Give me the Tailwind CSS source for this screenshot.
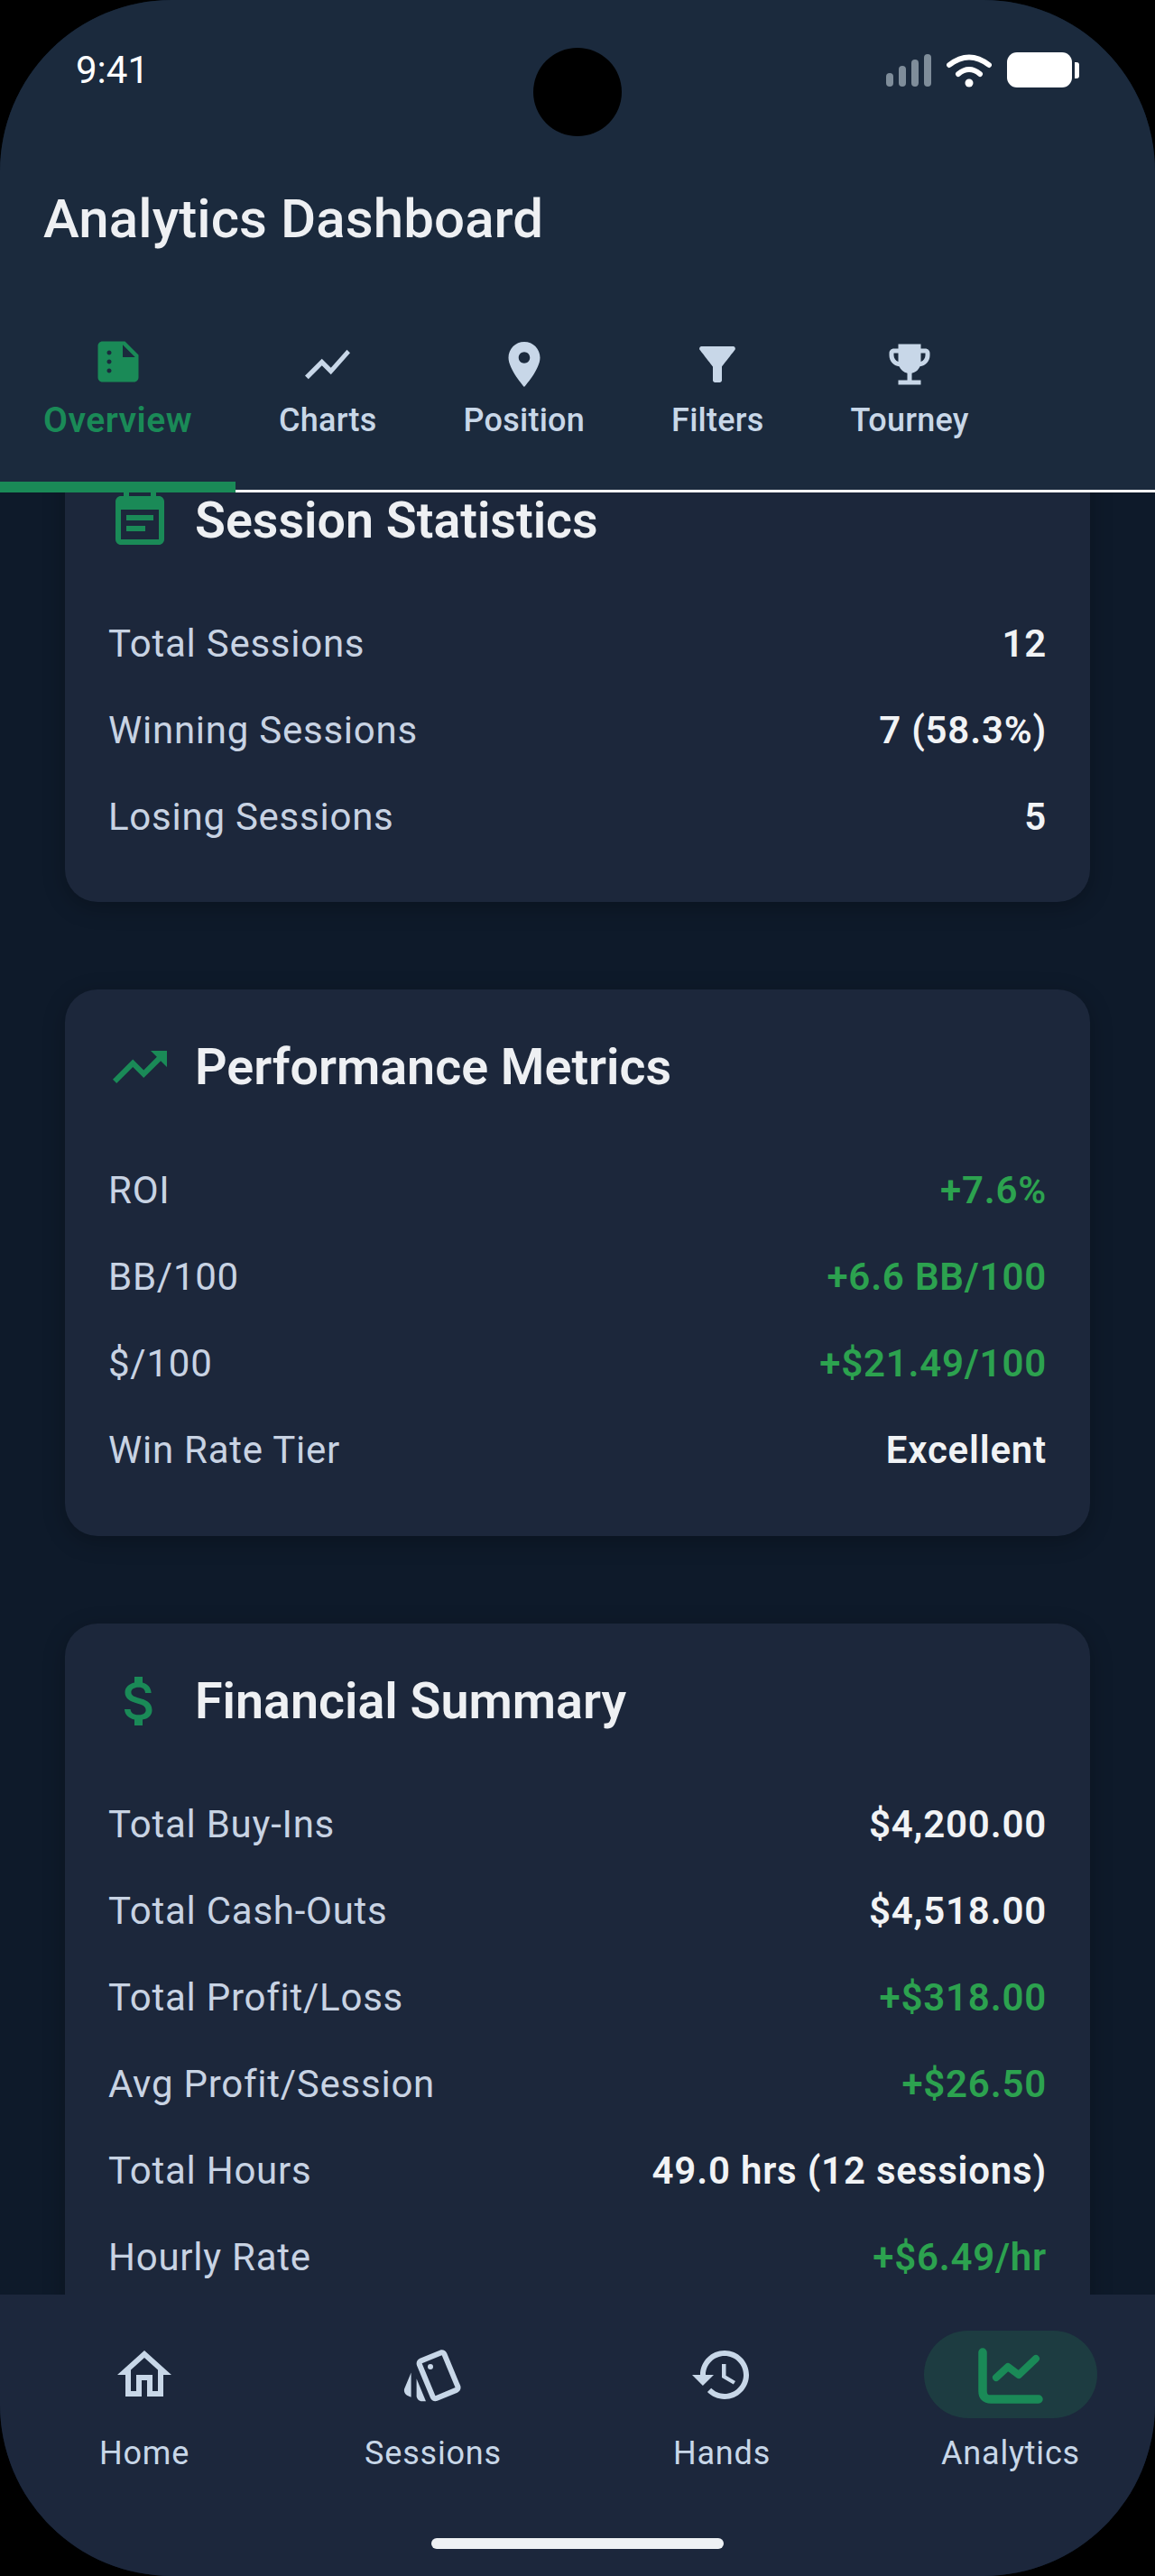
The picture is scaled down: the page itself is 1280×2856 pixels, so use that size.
<!DOCTYPE html>
<html lang="en">
<head>
  <meta charset="UTF-8" />
  <meta name="viewport" content="width=device-width, initial-scale=1.0" />
  <title>Analytics Dashboard</title>
  <script src="https://cdn.jsdelivr.net/npm/@tailwindcss/browser@4"></script>
</head>
<body class="bg-black font-['Roboto',sans-serif]">
  <div class="relative w-[1280px] h-[2856px] rounded-[190px] overflow-hidden flex flex-col bg-[#0e1a2a]">

    <!-- camera cutout -->
    <div class="absolute left-[591px] top-[53px] w-[98px] h-[98px] rounded-full bg-black z-20"></div>

    <header class="relative z-10 bg-[#1b2a3d] shrink-0">
      <div class="h-[155px] pl-[84px] pr-[84px] flex items-center justify-between">
        <span class="text-[42px] leading-none text-white">9:41</span>
        <div class="flex items-center gap-[17px]">
          <div class="flex items-end gap-[6px] h-[36px]">
            <span class="w-[8px] h-[15px] rounded-full bg-[#7f8d9a]"></span>
            <span class="w-[8px] h-[23px] rounded-full bg-[#7f8d9a]"></span>
            <span class="w-[8px] h-[30px] rounded-full bg-[#7f8d9a]"></span>
            <span class="w-[8px] h-[36px] rounded-full bg-[#7f8d9a]"></span>
          </div>
          <svg class="w-[50px] h-[38px]" viewBox="0 0 50 38" fill="none" stroke="white" stroke-width="6" stroke-linecap="round">
            <path d="M3 13 Q25 -4 47 13" />
            <path d="M13 23 Q25 13 37 23" />
            <circle cx="25" cy="33" r="4.5" fill="white" stroke="none" />
          </svg>
          <div class="flex items-center gap-[3px]">
            <div class="w-[72px] h-[39px] rounded-[11px] bg-white"></div>
            <div class="w-[5px] h-[18px] rounded-r-[3px] bg-white"></div>
          </div>
        </div>
      </div>

      <h1 class="mt-[52px] pl-[48px] text-[60px] leading-[72px] font-medium tracking-[0.1px] text-[#eef0f3]">Analytics Dashboard</h1>

      <nav class="relative mt-[95px] flex border-b-[3px] border-white pb-[55px]">
        <div class="relative px-[48px] flex flex-col items-center text-[#1a8a57]">
          <svg class="-mt-[3px] w-[60px] h-[60px]" viewBox="0 0 24 24" fill="currentColor"><path d="M15 3H5c-1.1 0-2 .9-2 2v14c0 1.1.89 2 1.99 2H19c1.1 0 2-.9 2-2V9l-6-6zM8 17c-.55 0-1-.45-1-1s.45-1 1-1 1 .45 1 1-.45 1-1 1zm0-4c-.55 0-1-.45-1-1s.45-1 1-1 1 .45 1 1-.45 1-1 1zm0-4c-.55 0-1-.45-1-1s.45-1 1-1 1 .45 1 1-.45 1-1 1zm6 1V4.5l5.5 5.5H14z"/></svg>
          <span class="mt-[13px] text-[39px] leading-[44px] tracking-[0.5px] font-semibold">Overview</span>
          <div class="absolute left-0 right-0 -bottom-[58px] h-[12px] bg-[#1a8a57]"></div>
        </div>
        <div class="px-[48px] flex flex-col items-center text-[#c8d7e8]">
          <svg class="w-[60px] h-[60px]" viewBox="0 0 24 24" fill="currentColor"><path d="M3.5 18.49l6-6.01 4 4L22 6.92l-1.41-1.41-7.09 7.97-4-4L2 16.99z"/></svg>
          <span class="mt-[10px] text-[36px] leading-[44px] tracking-[0.25px] font-medium">Charts</span>
        </div>
        <div class="px-[48px] flex flex-col items-center text-[#c8d7e8]">
          <svg class="w-[60px] h-[60px]" viewBox="0 0 24 24" fill="currentColor"><path d="M12 2C8.13 2 5 5.13 5 9c0 5.25 7 13 7 13s7-7.75 7-13c0-3.87-3.13-7-7-7zm0 9.5c-1.38 0-2.5-1.12-2.5-2.5s1.12-2.5 2.5-2.5 2.5 1.12 2.5 2.5-1.12 2.5-2.5 2.5z"/></svg>
          <span class="mt-[10px] text-[36px] leading-[44px] tracking-[0.25px] font-medium">Position</span>
        </div>
        <div class="px-[48px] flex flex-col items-center text-[#c8d7e8]">
          <svg class="w-[60px] h-[60px]" viewBox="0 0 24 24" fill="currentColor"><path d="M4.25 5.61C6.27 8.2 10 13 10 13v6c0 .55.45 1 1 1h2c.55 0 1-.45 1-1v-6s3.72-4.8 5.74-7.39c.51-.66.04-1.61-.79-1.61H5.04c-.83 0-1.3.95-.79 1.61z"/></svg>
          <span class="mt-[10px] text-[36px] leading-[44px] tracking-[0.25px] font-medium">Filters</span>
        </div>
        <div class="px-[48px] flex flex-col items-center text-[#c8d7e8]">
          <svg class="w-[60px] h-[60px]" viewBox="0 0 24 24" fill="currentColor"><path d="M19 5h-2V3H7v2H5c-1.1 0-2 .9-2 2v1c0 2.55 1.92 4.63 4.39 4.94.63 1.5 1.98 2.63 3.61 2.96V19H7v2h10v-2h-4v-3.1c1.63-.33 2.98-1.46 3.61-2.96C19.08 12.63 21 10.55 21 8V7c0-1.1-.9-2-2-2zM5 8V7h2v3.82C5.84 10.4 5 9.3 5 8zm14 0c0 1.3-.84 2.4-2 2.82V7h2v1z"/></svg>
          <span class="mt-[10px] text-[36px] leading-[44px] tracking-[0.25px] font-medium">Tourney</span>
        </div>
      </nav>
    </header>

    <main class="flex-1 min-h-0 overflow-hidden px-[72px]">
      <!-- scrolled: first card starts under the header -->
      <section class="-mt-[55px] rounded-[36px] bg-[#1c273b] shadow-[0_6px_24px_rgba(0,0,0,0.25)] pt-[50px] px-[48px] pb-[47px]">
        <div class="h-[72px] mb-[52px] flex items-center gap-[25px]">
          <svg class="w-[72px] h-[72px] -ml-[1px] text-[#1a8a57]" viewBox="0 0 24 24" fill="currentColor"><path d="M17 10H7v2h10v-2zm2-7h-1V1h-2v2H8V1H6v2H5c-1.11 0-1.99.9-1.99 2L3 19c0 1.1.89 2 2 2h14c1.1 0 2-.9 2-2V5c0-1.1-.9-2-2-2zm0 16H5V8h14v11zm-5-5H7v2h7v-2z"/></svg>
          <h2 class="text-[55.6px] leading-[56px] font-semibold text-[#eef0f3]">Session Statistics</h2>
        </div>
        <div class="h-[96px] flex items-center justify-between text-[42px]"><span class="tracking-[0.75px] text-[#c8d3e3]">Total Sessions</span><span class="font-semibold tracking-[0.8px] text-[#f1f3f5]">12</span></div>
        <div class="h-[96px] flex items-center justify-between text-[42px]"><span class="tracking-[0.75px] text-[#c8d3e3]">Winning Sessions</span><span class="font-semibold tracking-[0.8px] text-[#f1f3f5]">7 (58.3%)</span></div>
        <div class="h-[96px] flex items-center justify-between text-[42px]"><span class="tracking-[0.75px] text-[#c8d3e3]">Losing Sessions</span><span class="font-semibold tracking-[0.8px] text-[#f1f3f5]">5</span></div>
      </section>

      <section class="mt-[97px] rounded-[36px] bg-[#1c273b] shadow-[0_6px_24px_rgba(0,0,0,0.25)] pt-[50px] px-[48px] pb-[48px]">
        <div class="h-[72px] mb-[52px] flex items-center gap-[25px]">
          <svg class="w-[72px] h-[72px] -ml-[1px] text-[#1a8a57]" viewBox="0 0 24 24" fill="currentColor"><path d="M16 6l2.29 2.29-4.88 4.88-4-4L2 16.59 3.41 18l6-6 4 4 6.3-6.29L22 12V6z"/></svg>
          <h2 class="text-[55.6px] leading-[56px] font-semibold text-[#eef0f3]">Performance Metrics</h2>
        </div>
        <div class="h-[96px] flex items-center justify-between text-[42px]"><span class="tracking-[0.75px] text-[#c8d3e3]">ROI</span><span class="font-semibold tracking-[0.8px] text-[#2ca24f]">+7.6%</span></div>
        <div class="h-[96px] flex items-center justify-between text-[42px]"><span class="tracking-[0.75px] text-[#c8d3e3]">BB/100</span><span class="font-semibold tracking-[0.8px] text-[#2ca24f]">+6.6 BB/100</span></div>
        <div class="h-[96px] flex items-center justify-between text-[42px]"><span class="tracking-[0.75px] text-[#c8d3e3]">$/100</span><span class="font-semibold tracking-[0.8px] text-[#2ca24f]">+$21.49/100</span></div>
        <div class="h-[96px] flex items-center justify-between text-[42px]"><span class="tracking-[0.75px] text-[#c8d3e3]">Win Rate Tier</span><span class="font-semibold tracking-[0.8px] text-[#f1f3f5]">Excellent</span></div>
      </section>

      <section class="mt-[97px] rounded-[36px] bg-[#1c273b] shadow-[0_6px_24px_rgba(0,0,0,0.25)] pt-[50px] px-[48px] pb-[48px]">
        <div class="h-[72px] mb-[52px] flex items-center gap-[25px]">
          <svg class="w-[72px] h-[72px] -ml-[1px] text-[#1a8a57]" viewBox="0 0 24 24" fill="currentColor"><path d="M11.8 10.9c-2.27-.59-3-1.2-3-2.15 0-1.09 1.01-1.85 2.7-1.85 1.78 0 2.44.85 2.5 2.1h2.21c-.07-1.72-1.12-3.3-3.21-3.81V3h-3v2.16c-1.94.42-3.5 1.68-3.5 3.61 0 2.31 1.91 3.46 4.7 4.13 2.5.6 3 1.48 3 2.41 0 .69-.49 1.79-2.7 1.79-2.06 0-2.87-.92-2.98-2.1h-2.2c.12 2.19 1.76 3.42 3.68 3.83V21h3v-2.15c1.95-.37 3.5-1.5 3.5-3.55 0-2.84-2.43-3.81-4.7-4.4z"/></svg>
          <h2 class="text-[55.6px] leading-[56px] font-semibold text-[#eef0f3]">Financial Summary</h2>
        </div>
        <div class="h-[96px] flex items-center justify-between text-[42px]"><span class="tracking-[0.75px] text-[#c8d3e3]">Total Buy-Ins</span><span class="font-semibold tracking-[0.8px] text-[#f1f3f5]">$4,200.00</span></div>
        <div class="h-[96px] flex items-center justify-between text-[42px]"><span class="tracking-[0.75px] text-[#c8d3e3]">Total Cash-Outs</span><span class="font-semibold tracking-[0.8px] text-[#f1f3f5]">$4,518.00</span></div>
        <div class="h-[96px] flex items-center justify-between text-[42px]"><span class="tracking-[0.75px] text-[#c8d3e3]">Total Profit/Loss</span><span class="font-semibold tracking-[0.8px] text-[#2ca24f]">+$318.00</span></div>
        <div class="h-[96px] flex items-center justify-between text-[42px]"><span class="tracking-[0.75px] text-[#c8d3e3]">Avg Profit/Session</span><span class="font-semibold tracking-[0.8px] text-[#2ca24f]">+$26.50</span></div>
        <div class="h-[96px] flex items-center justify-between text-[42px]"><span class="tracking-[0.75px] text-[#c8d3e3]">Total Hours</span><span class="font-semibold tracking-[0.8px] text-[#f1f3f5]">49.0 hrs (12 sessions)</span></div>
        <div class="h-[96px] flex items-center justify-between text-[42px]"><span class="tracking-[0.75px] text-[#c8d3e3]">Hourly Rate</span><span class="font-semibold tracking-[0.8px] text-[#2ca24f]">+$6.49/hr</span></div>
      </section>
    </main>

    <footer class="relative z-10 h-[312px] shrink-0 bg-[#1c273c] pt-[40px] grid grid-cols-4 text-[#c8d7e8]">
      <div class="flex flex-col items-center">
        <div class="h-[97px] flex items-center"><svg class="w-[72px] h-[72px]" viewBox="0 0 24 24" fill="currentColor"><path d="M12 5.69l5 4.5V18h-2v-6H9v6H7v-7.81l5-4.5M12 3L2 12h3v8h6v-6h2v6h6v-8h3L12 3z"/></svg></div>
        <span class="mt-[17px] text-[36px] leading-[44px] tracking-[0.8px]">Home</span>
      </div>
      <div class="flex flex-col items-center">
        <div class="h-[97px] flex items-center"><svg class="w-[72px] h-[72px]" viewBox="0 0 24 24" fill="currentColor"><path d="M2.53 19.65l1.34.56v-9.03l-2.43 5.86c-.41 1.02.08 2.19 1.09 2.61zm19.5-3.7L17.07 3.98c-.31-.75-1.04-1.21-1.81-1.23-.26 0-.53.04-.79.15L7.1 5.95c-.75.31-1.21 1.03-1.23 1.8-.01.27.04.54.15.8l4.96 11.97c.31.76 1.05 1.22 1.83 1.23.26 0 .52-.05.77-.15l7.36-3.05c1.02-.42 1.51-1.59 1.09-2.6zm-9.2 3.8L7.87 7.79l7.35-3.04h.01l4.95 11.95-7.35 3.05z"/><circle cx="11" cy="9" r="1"/><path d="M5.88 19.75c0 1.1.9 2 2 2h1.45l-3.45-8.34v6.34z"/></svg></div>
        <span class="mt-[17px] text-[36px] leading-[44px] tracking-[0.8px]">Sessions</span>
      </div>
      <div class="flex flex-col items-center">
        <div class="h-[97px] flex items-center"><svg class="w-[72px] h-[72px]" viewBox="0 0 24 24" fill="currentColor"><path d="M13 3c-4.97 0-9 4.03-9 9H1l3.89 3.89.07.14L9 12H6c0-3.87 3.13-7 7-7s7 3.13 7 7-3.13 7-7 7c-1.93 0-3.68-.79-4.94-2.06l-1.42 1.42C8.27 19.99 10.51 21 13 21c4.97 0 9-4.03 9-9s-4.03-9-9-9zm-1 5v5l4.28 2.54.72-1.21-3.5-2.08V8H12z"/></svg></div>
        <span class="mt-[17px] text-[36px] leading-[44px] tracking-[0.8px]">Hands</span>
      </div>
      <div class="flex flex-col items-center">
        <div class="h-[97px] w-[192px] rounded-full bg-[#1d3c41] flex items-center justify-center">
          <svg class="w-[72px] h-[72px]" viewBox="0 0 72 72" fill="none" stroke="#1a8a57" stroke-linecap="round" stroke-linejoin="round">
            <path d="M5 11 V54 Q5 63 14 63 H67" stroke-width="9.5" />
            <path d="M20 39 L33 27 L45 36 L64 18" stroke-width="8" />
          </svg>
        </div>
        <span class="mt-[17px] text-[36px] leading-[44px] tracking-[0.8px]">Analytics</span>
      </div>
      <div class="absolute left-[478px] top-[270px] w-[324px] h-[12px] rounded-full bg-[#eef1f4]"></div>
    </footer>
  </div>
</body>
</html>
